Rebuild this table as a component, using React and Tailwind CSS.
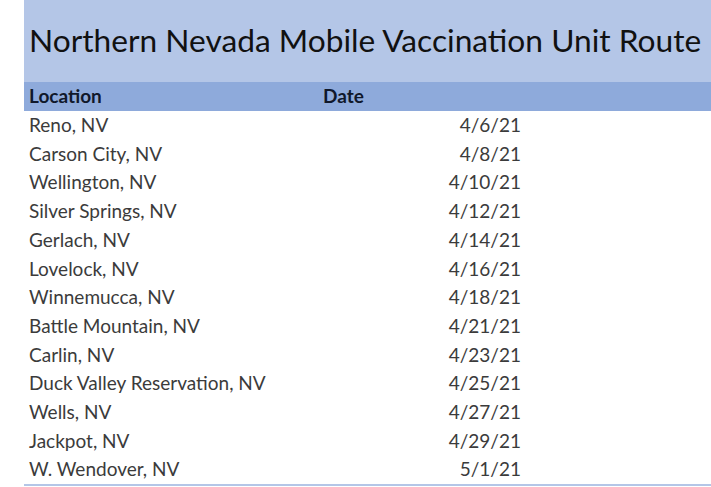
import React from "react";

const stops = [
  ["Reno, NV", "4/6/21"],
  ["Carson City, NV", "4/8/21"],
  ["Wellington, NV", "4/10/21"],
  ["Silver Springs, NV", "4/12/21"],
  ["Gerlach, NV", "4/14/21"],
  ["Lovelock, NV", "4/16/21"],
  ["Winnemucca, NV", "4/18/21"],
  ["Battle Mountain, NV", "4/21/21"],
  ["Carlin, NV", "4/23/21"],
  ["Duck Valley Reservation, NV", "4/25/21"],
  ["Wells, NV", "4/27/21"],
  ["Jackpot, NV", "4/29/21"],
  ["W. Wendover, NV", "5/1/21"],
];

const App = () => {
  return (
    <div className="w-[711px] h-[487px] bg-white pl-[24px] font-['Lato','Open_Sans',sans-serif]">
      <div className="flex flex-col">
        <div className="h-[82px] bg-[#b4c6e7] flex items-center pl-[5px] pb-[1px]">
          <h1 className="text-[31.7px] text-[#111] whitespace-nowrap">
            Northern Nevada Mobile Vaccination Unit Route
          </h1>
        </div>
        <div className="h-[29px] bg-[#8eaadb] flex items-center text-[19px] font-bold text-[#10182b]">
          <span className="w-[299px] pl-[5px]">Location</span>
          <span>Date</span>
        </div>
        {stops.map(([place, date]) => (
          <div key={place} className="h-[28.7px] flex items-center text-[19px] text-[#3b3b3b]">
            <span className="w-[299px] pl-[5px] whitespace-nowrap">{place}</span>
            <span className="w-[198px] text-right">{date}</span>
          </div>
        ))}
        <div className="h-[2px] bg-[#b4c6e7]" />
      </div>
    </div>
  );
};

export default App;
